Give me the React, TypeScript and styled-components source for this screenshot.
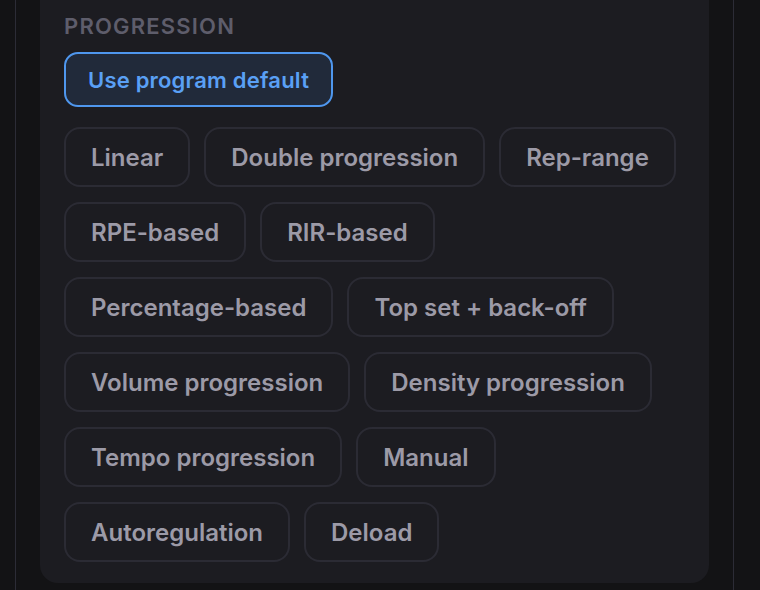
import React from 'react';
import styled, { createGlobalStyle } from 'styled-components';

const GlobalStyle = createGlobalStyle`
  html, body {
    margin: 0;
    padding: 0;
    background: #131315;
  }
  body {
    font-family: Inter, "Noto Sans", sans-serif;
    -webkit-font-smoothing: antialiased;
  }
`;

const Shell = styled.div`
  margin-left: 15px;
  width: 719px;
  min-height: 590px;
  box-sizing: border-box;
  border-left: 1px solid #2c2c36;
  border-right: 1px solid #2c2c36;
  padding: 0 24px;
`;

const Panel = styled.section`
  background: #1c1c21;
  border-radius: 0 0 18px 18px;
  padding: 13px 24px 21px 24px;
`;

const Label = styled.div`
  font-size: 22px;
  line-height: 26px;
  font-weight: 600;
  letter-spacing: 1.2px;
  color: #5e5d6b;
  text-transform: uppercase;
`;

const DefaultButton = styled.button<{ $active?: boolean }>`
  margin-top: 13px;
  height: 55px;
  padding: 0 22px;
  border-radius: 14px;
  border: 2px solid ${({ $active }) => ($active ? '#4f97ee' : '#2b2b34')};
  background: ${({ $active }) => ($active ? '#212a3a' : 'transparent')};
  color: ${({ $active }) => ($active ? '#5aa0f5' : '#9c9aa7')};
  font-family: inherit;
  font-size: 22px;
  font-weight: 600;
  letter-spacing: 0.2px;
  cursor: pointer;
`;

const Options = styled.div`
  display: flex;
  flex-wrap: wrap;
  gap: 15px 14px;
  margin-top: 20px;
`;

const Chip = styled.button`
  height: 60px;
  padding: 0 25px;
  border-radius: 16px;
  border: 2px solid #2b2b34;
  background: transparent;
  color: #9c9aa7;
  font-family: inherit;
  font-size: 24px;
  font-weight: 600;
  cursor: pointer;
`;

const options = [
  'Linear',
  'Double progression',
  'Rep-range',
  'RPE-based',
  'RIR-based',
  'Percentage-based',
  'Top set + back-off',
  'Volume progression',
  'Density progression',
  'Tempo progression',
  'Manual',
  'Autoregulation',
  'Deload',
];

export default function App() {
  return (
    <>
      <GlobalStyle />
      <Shell>
        <Panel>
          <Label>Progression</Label>
          <DefaultButton $active>Use program default</DefaultButton>
          <Options>
            {options.map((o) => (
              <Chip key={o}>{o}</Chip>
            ))}
          </Options>
        </Panel>
      </Shell>
    </>
  );
}
